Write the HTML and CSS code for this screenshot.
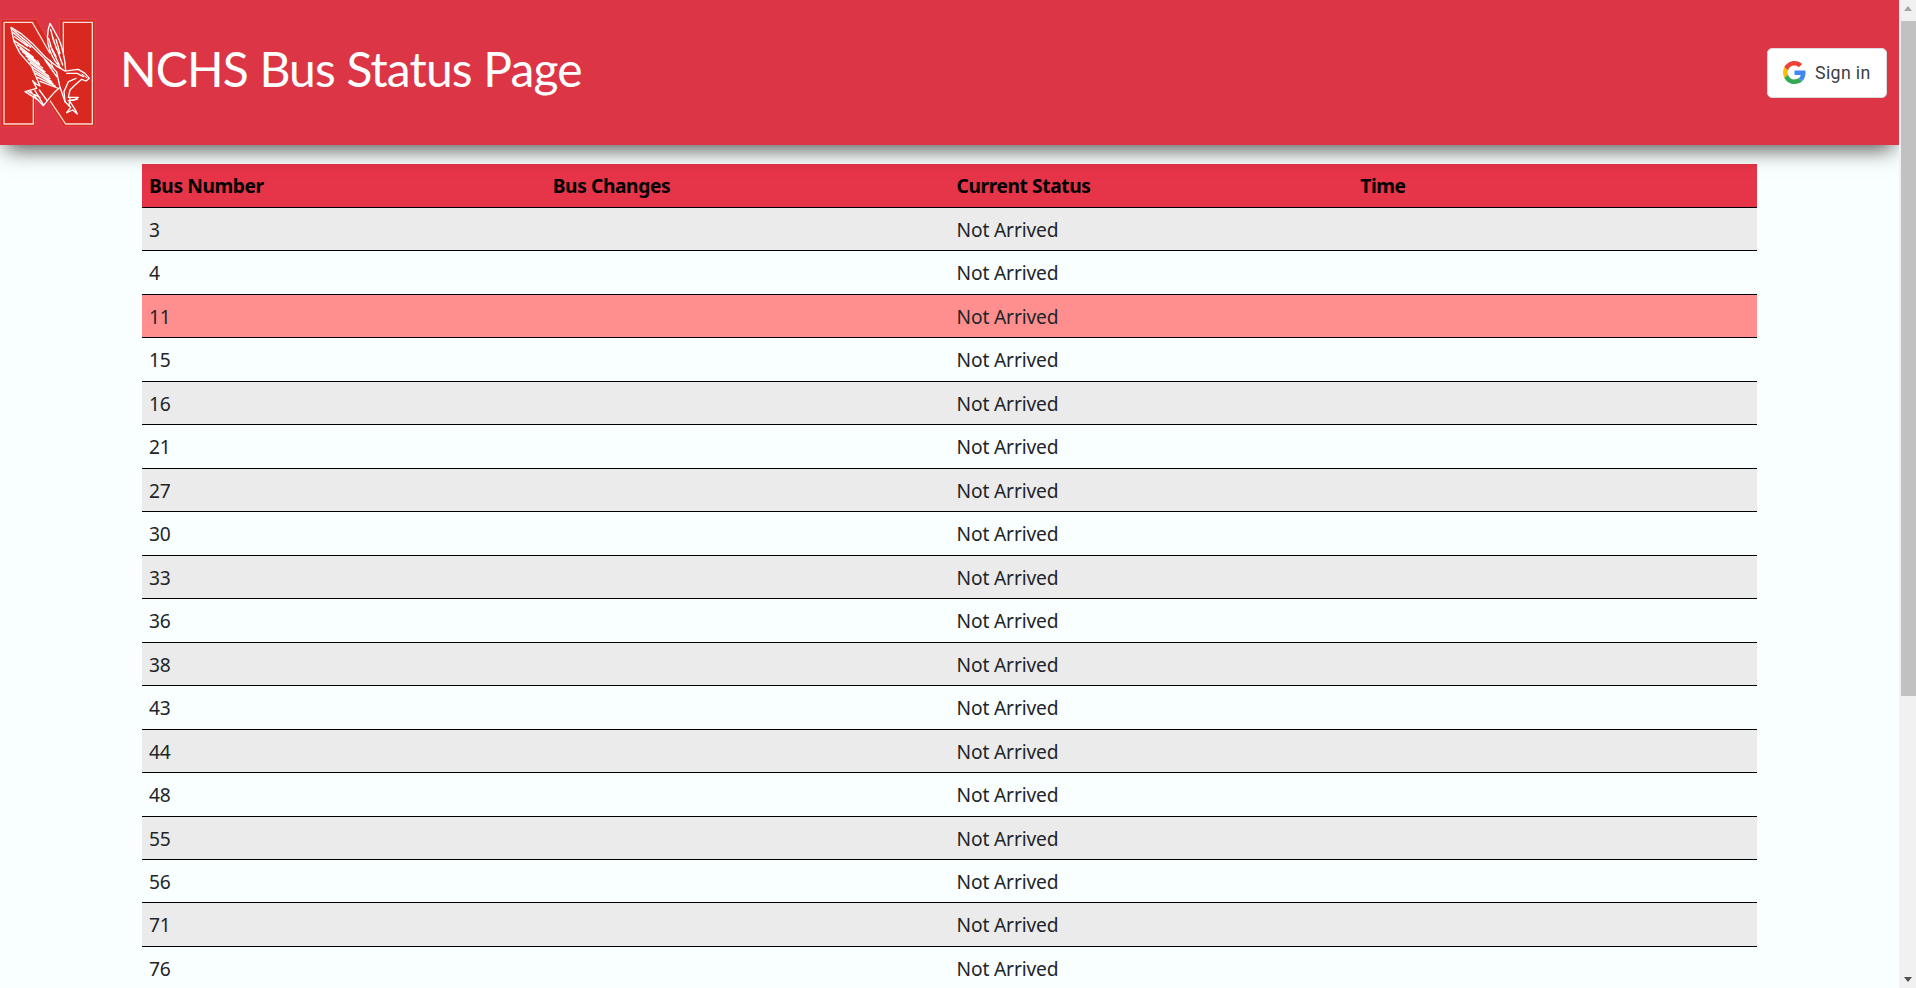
FILE: index.html
```html
<!DOCTYPE html>
<html lang="en">
<head>
<meta charset="utf-8">
<title>NCHS Bus Status Page</title>
<link rel="stylesheet" href="styles.css">
</head>
<body>
<div class="viewport">
  <div class="page">
    <header class="topbar">
      <div class="brand">
        <svg class="logo" viewBox="0 21 288 336" aria-hidden="true">
          <path class="n-fill" d="M3 28H110L178 150V28H285V350H190L107 215V350H3Z"/>
          <path class="n-line" d="M12 37H97L150 130M190 130V37H277V342H197L150 272M100 240V342H12V37"/>
          <path class="eagle-body" d="M190 182C172 165 158 145 150 122C138 90 142 62 150 40C155 50 165 65 172 80C185 100 196 150 197 182Z"/>
          <path class="eagle-feather" d="M152 58L160 90L172 120L188 165M146 85L156 120L178 165M168 88L180 130M158 80L170 118M150 105L168 140"/>
          <path class="eagle-body" d="M33 52L62 70L100 103L135 140L172 170L195 183L205 182L235 178L255 190L268 205L258 213L245 208L225 225L210 240L205 262L235 262L222 270L208 272L225 298L232 312L218 300L200 308L212 292L195 275L180 232L165 245L150 262L130 287L112 268L75 245L110 235L98 212L108 222L120 228L95 170L60 130L42 95Z"/>
          <path class="eagle-feather" d="M36 58L85 98L128 140M40 68L92 112M44 80L82 108M42 92L88 122M52 104L100 142M60 116L108 152M68 126L118 162M78 138L128 174M84 148L135 185M90 158L146 198M96 170L150 206M100 180L155 215M106 190L160 222M112 202L166 228M120 214L172 234M85 245L120 262M92 244L112 268M105 242L130 284M118 240L140 270M128 140L170 186L180 232M135 150L170 200M200 190L232 190L250 200M195 275L192 245L205 215L228 205M210 262L207 288M205 272L232 268"/>
          <path class="eagle-thin" d="M245 192L262 204M150 150L160 175M112 150L120 165"/>
        </svg>
        <h1 class="title">NCHS Bus Status Page</h1>
      </div>
      <button class="signin" type="button">
        <svg class="g-icon" viewBox="0 0 48 48" aria-hidden="true">
          <path fill="#EA4335" d="M24 9.500c3.540 0 6.710 1.220 9.210 3.600l6.850-6.850C35.900 2.380 30.470 0 24 0 14.620 0 6.510 5.380 2.560 13.220l7.980 6.190C12.430 13.720 17.740 9.500 24 9.500z"/>
          <path fill="#4285F4" d="M46.980 24.550c0-1.570-.15-3.090-.38-4.550H24v9.020h12.940c-.58 2.960-2.260 5.480-4.780 7.180l7.730 6c4.510-4.180 7.090-10.360 7.090-17.650z"/>
          <path fill="#FBBC05" d="M10.530 28.590c-.48-1.450-.76-2.990-.76-4.590s.27-3.140.76-4.590l-7.980-6.190C.92 16.460 0 20.120 0 24c0 3.880.92 7.540 2.560 10.780l7.970-6.190z"/>
          <path fill="#34A853" d="M24 48c6.480 0 11.930-2.130 15.890-5.810l-7.730-6c-2.150 1.450-4.920 2.300-8.160 2.300-6.260 0-11.570-4.220-13.470-9.910l-7.980 6.190C6.510 42.620 14.620 48 24 48z"/>
        </svg>
        <span>Sign in</span>
      </button>
    </header>
    <main class="content">
      <table class="bus-table">
        <thead>
          <tr><th>Bus Number</th><th>Bus Changes</th><th>Current Status</th><th>Time</th></tr>
        </thead>
        <tbody>
          <tr><td>3</td><td></td><td>Not Arrived</td><td></td></tr>
          <tr><td>4</td><td></td><td>Not Arrived</td><td></td></tr>
          <tr class="changed"><td>11</td><td></td><td>Not Arrived</td><td></td></tr>
          <tr><td>15</td><td></td><td>Not Arrived</td><td></td></tr>
          <tr><td>16</td><td></td><td>Not Arrived</td><td></td></tr>
          <tr><td>21</td><td></td><td>Not Arrived</td><td></td></tr>
          <tr><td>27</td><td></td><td>Not Arrived</td><td></td></tr>
          <tr><td>30</td><td></td><td>Not Arrived</td><td></td></tr>
          <tr><td>33</td><td></td><td>Not Arrived</td><td></td></tr>
          <tr><td>36</td><td></td><td>Not Arrived</td><td></td></tr>
          <tr><td>38</td><td></td><td>Not Arrived</td><td></td></tr>
          <tr><td>43</td><td></td><td>Not Arrived</td><td></td></tr>
          <tr><td>44</td><td></td><td>Not Arrived</td><td></td></tr>
          <tr><td>48</td><td></td><td>Not Arrived</td><td></td></tr>
          <tr><td>55</td><td></td><td>Not Arrived</td><td></td></tr>
          <tr><td>56</td><td></td><td>Not Arrived</td><td></td></tr>
          <tr><td>71</td><td></td><td>Not Arrived</td><td></td></tr>
          <tr><td>76</td><td></td><td>Not Arrived</td><td></td></tr>
        </tbody>
      </table>
    </main>
  </div>
  <div class="scrollbar" aria-hidden="true">
    <div class="scroll-btn"><span class="arrow-up"></span></div>
    <div class="scroll-track"><div class="scroll-thumb"></div></div>
    <div class="scroll-btn"><span class="arrow-down"></span></div>
  </div>
</div>
</body>
</html>
```

FILE: styles.css
```css
* { box-sizing: border-box; }
html, body { margin: 0; height: 100%; overflow: hidden; }
body { background: #f9fffe; color: #212529; font-family: "Noto Sans", "Open Sans", sans-serif; font-size: 19.2px; line-height: 26.4px; }
.viewport { display: flex; height: 100vh; }
.page { flex: 1; min-width: 0; height: 100%; overflow: hidden; }
.topbar { position: relative; z-index: 1; height: 145px; padding: 0 12px 0 0; display: flex; align-items: center; justify-content: space-between; background: #dc3545; box-shadow: 0 10px 20px -6px rgba(0,0,0,.7); }
.brand { display: flex; align-items: center; gap: 24px; }
.logo { display: block; width: 96px; height: 112px; flex: none; margin-top: 1px; }
.n-fill { fill: #d8281f; stroke: #e2474c; stroke-width: 3; }
.n-line { fill: none; stroke: #f9dcd6; stroke-width: 4; }
.eagle-body { fill: #d8281f; stroke: #fff; stroke-width: 4; stroke-linejoin: round; }
.eagle-feather { fill: none; stroke: #fff; stroke-width: 4; stroke-linecap: round; }
.eagle-thin { fill: none; stroke: #fff; stroke-width: 3; }
.title { margin: 0 0 8px; color: #fff; font-family: Lato, sans-serif; font-weight: 400; font-size: 48px; line-height: 1.2; letter-spacing: -.85px; }
.signin { display: flex; align-items: center; gap: 9px; width: 120px; height: 50px; padding: 0 15px; background: #fff; border: 1px solid #dadce0; border-radius: 5px; color: #3c4043; font-family: Roboto, sans-serif; font-size: 17.800px; font-weight: 400; letter-spacing: .35px; }
.g-icon { display: block; width: 23px; height: 23px; flex: none; }
.content { padding: 19px 142px 0; }
.bus-table { width: 100%; table-layout: fixed; border-collapse: collapse; }
.bus-table th, .bus-table td { height: 43.470px; padding: 9px 7px 7px; text-align: left; vertical-align: top; border-bottom: 1px solid #000; letter-spacing: -.15px; }
.bus-table th { color: #000; background: #e63549; font-weight: 700; letter-spacing: -.4px; }
.bus-table tbody tr:nth-child(odd) td { background: #ebebeb; }
.bus-table tbody tr.changed td { background: #ff8f8f; }
.scrollbar { flex: none; width: 17px; height: 100%; display: flex; flex-direction: column; background: #f1f1f1; }
.scroll-btn { flex: none; height: 17px; display: flex; align-items: center; justify-content: center; }
.arrow-up, .arrow-down { width: 0; height: 0; border-left: 4.500px solid transparent; border-right: 4.500px solid transparent; }
.arrow-up { border-bottom: 5px solid #a3a3a3; }
.arrow-down { border-top: 5px solid #505050; }
.scroll-track { flex: 1; padding: 4px 0 0 2px; }
.scroll-thumb { height: 675px; background: #c1c1c1; }
```
